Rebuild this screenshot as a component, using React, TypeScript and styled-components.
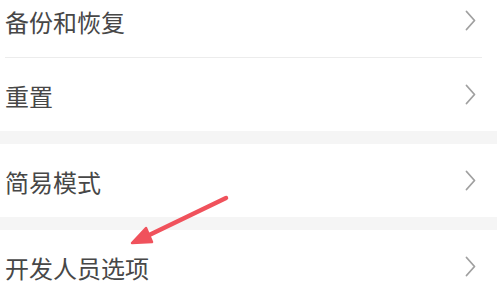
import styled, { createGlobalStyle } from 'styled-components';

const GlobalStyle = createGlobalStyle`
  html, body {
    margin: 0;
    padding: 0;
    background: #ffffff;
    overflow: hidden;
  }
  body {
    font-family: "Noto Sans CJK SC", "Noto Sans", sans-serif;
  }
`

const Screen = styled.div`
  position: relative;
  width: 497px;
  height: 302px;
  overflow: hidden;
  background: #ffffff;
`

const List = styled.div`
  display: flex;
  flex-direction: column;
  margin-top: -16px;
`

const Row = styled.div`
  display: flex;
  align-items: center;
  justify-content: space-between;
  height: 73px;
  padding: 0 21px 0 5px;
  box-sizing: border-box;
`

const Label = styled.span`
  font-size: 24px;
  line-height: 1;
  color: #474747;
  letter-spacing: 0;
  margin-top: 3px;
`

const Divider = styled.div`
  height: 1px;
  margin: 0 15px 0 5px;
  background: #ececec;
`

const Gap = styled.div`
  height: 13px;
  background: #f5f5f5;
`

const Arrow = styled.svg`
  position: absolute;
  left: 0;
  top: 0;
  pointer-events: none;
`

const Chevron = () => (
  <svg width="11" height="21" viewBox="0 0 11 21">
    <polyline points="1.5,1.5 9.5,10.5 1.5,19.5" fill="none" stroke="#a0a0a0" strokeWidth="1.8" strokeLinecap="round" strokeLinejoin="round" />
  </svg>
)

const Item = ({ label }: { label: string }) => (
  <Row>
    <Label>{label}</Label>
    <Chevron />
  </Row>
)

const App = () => {
  return (
    <>
      <GlobalStyle />
      <Screen>
        <List>
          <Item label="备份和恢复" />
          <Divider />
          <Item label="重置" />
          <Gap />
          <Item label="简易模式" />
          <Gap />
          <Item label="开发人员选项" />
          <Divider />
        </List>
        <Arrow width="497" height="302" viewBox="0 0 497 302">
          <line x1="226" y1="198" x2="143" y2="238" stroke="#f0525c" strokeWidth="4.5" strokeLinecap="round" />
          <polygon points="132,243 146,228 152,242" fill="#f0525c" stroke="#f0525c" strokeWidth="2.5" strokeLinejoin="round" />
        </Arrow>
      </Screen>
    </>
  );
}

export default App;
